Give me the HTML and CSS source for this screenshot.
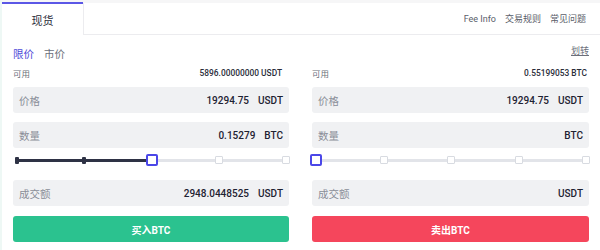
FILE: index.html
```html
<!DOCTYPE html>
<html lang="zh">
<head>
  <meta charset="UTF-8" />
  <title>现货</title>
  <link rel="stylesheet" href="styles.css">
</head>
<body>
  <div class="header">
    <div class="tab active">现货</div>
    <div class="header-rest">
      <a class="link latin">Fee Info</a>
      <a class="link">交易规则</a>
      <a class="link">常见问题</a>
    </div>
  </div>

  <div class="panels">
    <div class="panel">
      <div class="row types">
        <span class="type on">限价</span>
        <span class="type">市价</span>
      </div>
      <div class="row avail">
        <span>可用</span>
        <span class="val">5896.00000000 USDT</span>
      </div>
      <div class="field">
        <span class="label">价格</span>
        <span class="num">19294.75</span>
        <span class="unit">USDT</span>
      </div>
      <div class="field">
        <span class="label">数量</span>
        <span class="num">0.15279</span>
        <span class="unit">BTC</span>
      </div>
      <div class="slider" style="background-size: 50% 3px, 100% 3px;">
        <span class="stop"><span class="mark filled"></span></span>
        <span class="stop"><span class="mark filled"></span></span>
        <span class="stop"><span class="thumb"></span></span>
        <span class="stop"><span class="mark"></span></span>
        <span class="stop"><span class="mark"></span></span>
      </div>
      <div class="field">
        <span class="label">成交额</span>
        <span class="num">2948.0448525</span>
        <span class="unit">USDT</span>
      </div>
      <button class="btn buy">买入BTC</button>
    </div>

    <div class="panel right">
      <div class="row types">
        <span class="transfer">划转</span>
      </div>
      <div class="row avail">
        <span>可用</span>
        <span class="val">0.55199053 BTC</span>
      </div>
      <div class="field">
        <span class="label">价格</span>
        <span class="num">19294.75</span>
        <span class="unit">USDT</span>
      </div>
      <div class="field">
        <span class="label">数量</span>
        <span class="num"></span>
        <span class="unit">BTC</span>
      </div>
      <div class="slider" style="background-size: 0% 3px, 100% 3px;">
        <span class="stop"><span class="thumb"></span></span>
        <span class="stop"><span class="mark"></span></span>
        <span class="stop"><span class="mark"></span></span>
        <span class="stop"><span class="mark"></span></span>
        <span class="stop"><span class="mark"></span></span>
      </div>
      <div class="field">
        <span class="label">成交额</span>
        <span class="num"></span>
        <span class="unit">USDT</span>
      </div>
      <button class="btn sell">卖出BTC</button>
    </div>
  </div>
</body>
</html>
```

FILE: styles.css
```css
body {
  margin: 0;
  font-family: Roboto, "Noto Sans CJK SC", sans-serif;
  color: #1e2232;
  background: #fff;
  width: 600px;
  height: 250px;
  overflow: hidden;
  border-left: 2px solid #eef8f5;
  box-sizing: border-box;
}
.header {
  display: flex;
  height: 35px;
  background: #f6f6f7;
}
.tab {
  width: 81px;
  margin-top: 2px;
  border-top: 2px solid #5b57e6;
  background: #fff;
  display: flex;
  align-items: center;
  justify-content: center;
  font-size: 11px;
  color: #2a2d3a;
}
.header-rest {
  flex: 1;
  margin-top: 3px;
  background: #fff;
  border-left: 1px solid #ececef;
  border-bottom: 1px solid #ececef;
  display: flex;
  align-items: center;
  justify-content: flex-end;
  gap: 9px;
  padding-right: 14px;
}
.link {
  font-size: 9px;
  color: #5a5e6a;
}
.link.latin {
  font-size: 9px;
}
.panels {
  display: grid;
  grid-template-columns: 276px 277px;
  gap: 23px;
  padding-left: 11px;
}
.panel {
  display: flex;
  flex-direction: column;
  padding-top: 8px;
}
.row {
  height: 20px;
  display: flex;
  align-items: center;
}
.types {
  gap: 10px;
  font-size: 10.5px;
}
.type {
  color: #6b6f7a;
}
.type.on {
  color: #4d49d8;
}
.transfer {
  margin-left: auto;
  margin-top: -6px;
  font-size: 9px;
  color: #6b6f7a;
  text-decoration: underline;
}
.avail {
  justify-content: space-between;
  font-size: 8.5px;
  color: #6b6f7a;
  padding-right: 7px;
}
.right .avail {
  padding-right: 2px;
}
.avail .val {
  color: #2a2d3a;
  font-size: 8.4px;
  font-weight: 500;
}
.field {
  height: 26px;
  margin-top: 4px;
  margin-bottom: 5px;
  background: #f0f1f3;
  border-radius: 3px;
  display: flex;
  align-items: center;
  padding: 0 6px;
  font-size: 10px;
}
.label {
  color: #8a8e98;
  flex: 1;
  font-size: 10.5px;
}
.num {
  color: #1e2232;
  font-weight: 500;
}
.unit {
  margin-left: 9px;
  color: #1e2232;
  font-weight: 500;
}
.slider {
  height: 12px;
  margin: 1px -3px 10px -2px;
  display: flex;
  align-items: center;
  justify-content: space-between;
  background-image: linear-gradient(#2e3245, #2e3245), linear-gradient(#e2e4e9, #e2e4e9);
  background-repeat: no-repeat;
  background-position: left center;
  background-origin: content-box;
  background-clip: content-box;
  padding: 0 6px;
}
.stop {
  width: 12px;
  height: 12px;
  margin: 0 -6px;
  display: flex;
  align-items: center;
  justify-content: center;
}
.mark {
  width: 6px;
  height: 6px;
  background: #fff;
  border: 1px solid #d8dbe1;
  border-radius: 1px;
}
.mark.filled {
  width: 4px;
  height: 7px;
  background: #2e3245;
  border: none;
}
.thumb {
  width: 8px;
  height: 8px;
  background: #fff;
  border: 2px solid #4b47e8;
  border-radius: 2px;
}
.btn {
  height: 26px;
  margin-top: 5px;
  border: none;
  border-radius: 3px;
  color: #fff;
  font-family: Roboto, "Noto Sans CJK SC", sans-serif;
  font-size: 10px;
  font-weight: 700;
}
.buy {
  background: #2bc28f;
}
.sell {
  background: #f5465c;
}
```
